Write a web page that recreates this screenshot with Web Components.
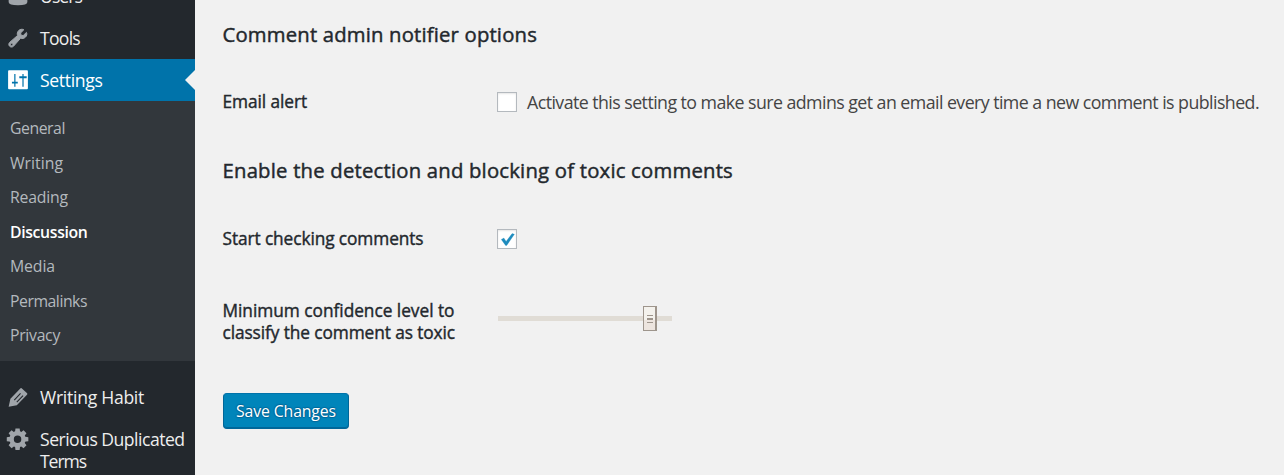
<!DOCTYPE html>
<html lang="en">
<head>
<meta charset="utf-8">
<title>Discussion Settings</title>
<style>
html,body{margin:0;height:100%;overflow:hidden}
body{font-family:"Open Sans","Noto Sans",sans-serif;background:#f1f1f1;color:#23282d}
</style>
</head>
<body>
<settings-page></settings-page>
<script>
const define = (name, html, setup) => {
  const t = document.createElement('template');
  t.innerHTML = html;
  customElements.define(name, class extends HTMLElement {
    constructor() {
      super();
      this.attachShadow({ mode: 'open' }).append(t.content.cloneNode(true));
    }
    connectedCallback() { if (setup) setup(this, this.shadowRoot); }
  });
};

// One line of text tracked to a given width.
define('fit-text', `<style>:host{display:block;white-space:nowrap;font-variant-ligatures:none}span{display:inline-block}</style><span><slot></slot></span>`,
  (el, root) => {
    const span = root.querySelector('span');
    const n = el.textContent.length;
    const natural = span.getBoundingClientRect().width;
    span.style.letterSpacing = ((+el.getAttribute('width') - natural) / n).toFixed(3) + 'px';
  });

const icons = {
  users: '<path d="M1.500 12h17v3.500q0 3-8.500 3t-8.500-3z"/>',
  tools: '<path stroke="currentColor" stroke-width=".9" d="M16.7 9.3c-1.2 1.2-2.9 1.500-4.400 1l-6.400 7.200c-1 1-2.600 1-3.500 0-1-1-1-2.500 0-3.500l7.200-6.300c-.6-1.500-.2-3.200 1-4.500C11.800 2 13.800 1.700 15.300 2.500l-2.900 2.900.3 2 2 .4 3-2.900c.7 1.500.3 3.200-1 4.400zM5 16.800c.5-.5.5-1.200 0-1.600-.4-.5-1.100-.5-1.600 0-.4.4-.4 1.100 0 1.600.5.400 1.200.400 1.600 0z" fill-rule="evenodd"/>',
  settings: '<path fill-rule="evenodd" d="M1.800 1.200h16.400q.8 0 .8.800v15.600q0 .8-.8.8H1.800q-.8 0-.8-.8V2q0-.8.800-.8zM6.600 4.500v7H4.500v1.700h2.100v2.900h1.100v-2.900h2.100v-1.700H7.700v-7zM14 4.500v2.100h-2.800v1.700H14v7.800h1.100V8.300h2.800V6.600h-2.800V4.500z"/>',
  edit: '<path d="M13.300 2.100l5 4.600q.5.700-.1 1.300l-9.300 9.600-7.400 1.300 1.600-7.200 9.200-9.600q.5-.5 1 0z"/><path d="M6.600 12.800l5.700-6M8.900 14.700l5.700-6" stroke="#23282d" stroke-width="1" fill="none"/>',
  gear: '<g transform="translate(9.600 10.200)"><circle r="5.400" fill="none" stroke="currentColor" stroke-width="4"/><path d="M-1.900-9.800h3.800l.5 4h-4.800zM-1.900 9.800h3.800l.5-4h-4.800zM-9.800-1.900v3.800l4 .5v-4.800zM9.800-1.900v3.800l-4 .5v-4.800z"/><path transform="rotate(45)" d="M-1.900-9.600h3.800l.5 4h-4.800zM-1.900 9.600h3.800l.5-4h-4.800zM-9.600-1.900v3.800l4 .5v-4.800zM9.600-1.900v3.800l-4 .5v-4.800z"/></g>'
};
define('menu-icon', `<style>:host{display:block;width:22px;height:22px}svg{display:block;width:100%;height:100%;fill:currentColor;overflow:visible}</style><svg viewBox="0 0 20 20"></svg>`,
  (el, root) => { root.querySelector('svg').innerHTML = icons[el.getAttribute('name')] || ''; });

define('menu-item', `<style>
:host{display:flex;align-items:flex-start;position:relative;box-sizing:border-box;min-height:42.400px;padding:10.700px 0 9.700px 6.500px;gap:11.500px;color:#eee;font-size:17.600px;line-height:22px}
menu-icon{color:#a0a5aa}
:host([current]){background:#0073aa;color:#fff}
:host([current]) menu-icon{color:#fff}
:host([current])::after{content:"";position:absolute;right:0;top:11px;border:10px solid transparent;border-left:0;border-right-color:#f1f1f1}
</style><menu-icon></menu-icon><div><slot></slot></div>`,
  (el, root) => {
    const icon = root.querySelector('menu-icon');
    icon.setAttribute('name', el.getAttribute('icon'));
    icon.shadowRoot.querySelector('svg').innerHTML = icons[el.getAttribute('icon')];
  });

define('sub-item', `<style>:host{display:block;padding-left:10px;font-size:15.800px;line-height:34.500px;color:#b4b9be}:host([current]){color:#fff;font-weight:600}</style><slot></slot>`);

define('admin-menu', `<style>
:host{display:block;width:195px;height:475px;background:#23282d;overflow:hidden;flex:none}
.menu{margin-top:-26px}
.sub{background:#32373c;padding:10px 0 8.500px;height:241.500px}
.gap{height:13.700px}
</style>
<div class="menu">
<menu-item icon="users"><fit-text width="42">Users</fit-text></menu-item>
<menu-item icon="tools"><fit-text width="40">Tools</fit-text></menu-item>
<menu-item icon="settings" current><fit-text width="62.500">Settings</fit-text></menu-item>
<div class="sub">
<sub-item><fit-text width="55">General</fit-text></sub-item>
<sub-item><fit-text width="53">Writing</fit-text></sub-item>
<sub-item><fit-text width="58">Reading</fit-text></sub-item>
<sub-item current><fit-text width="77.500">Discussion</fit-text></sub-item>
<sub-item><fit-text width="45">Media</fit-text></sub-item>
<sub-item><fit-text width="77">Permalinks</fit-text></sub-item>
<sub-item><fit-text width="50">Privacy</fit-text></sub-item>
</div>
<div class="gap"></div>
<menu-item icon="edit"><fit-text width="104">Writing Habit</fit-text></menu-item>
<menu-item icon="gear"><fit-text width="144.500">Serious Duplicated</fit-text><fit-text width="46">Terms</fit-text></menu-item>
</div>`);

define('section-title', `<style>:host{display:block;font-size:20.300px;line-height:28px;-webkit-text-stroke:.45px currentColor}</style><slot></slot>`);

define('form-row', `<style>
:host{display:grid;grid-template-columns:275px 1fr;align-items:start}
.label{font-size:17.300px;line-height:22px;-webkit-text-stroke:.4px currentColor}
</style><div class="label"><slot name="label"></slot></div><slot></slot>`);

define('check-box', `<style>
:host{display:flex;gap:10px;align-items:center;height:20px;color:#444;font-size:17.800px;line-height:24px}
i{box-sizing:border-box;width:20px;height:20px;border:1px solid #b4b9be;background:#fff;box-shadow:inset 0 1px 2px rgba(0,0,0,.1);flex:none}
svg{display:none;width:18px;height:18px}
:host([checked]) svg{display:block}
</style><i><svg viewBox="0 0 18 18"><path d="M3.300 9.400l2.600-1.300 2.200 3.400 6-7.900 2.300.7-7.700 11.100H7.600z" fill="#1e8cbe" stroke="#1e8cbe" stroke-width=".3"/></svg></i><slot></slot>`);

define('range-slider', `<style>
:host{display:flex;align-items:center;width:174px;height:25px}
.track{flex:1;height:5px;background:#e0dcd5}
.track:last-child{flex:none;width:15px}
.thumb{box-sizing:border-box;width:14px;height:25px;border:1px solid #9e958c;border-right-width:2px;background:linear-gradient(#f4f2ed 13px,#ede5df 13px);display:flex;flex-direction:column;align-items:center;padding-top:8px;gap:2px}
b{width:6px;height:1px;background:#9e958c}b:nth-child(2){height:2px}
</style><div class="track"></div><div class="thumb"><b></b><b></b><b></b></div><div class="track"></div>`);

define('primary-button', `<style>
:host{display:block}
button{box-sizing:border-box;display:flex;align-items:center;width:126px;height:36px;padding:0 0 0 12px;border:1px solid;border-color:#0073aa #006799 #006799;border-radius:4px;background:#0085ba;box-shadow:inset 0 -1px 0 #006799;color:#fff;font:15.800px/24px "Open Sans","Noto Sans",sans-serif;text-shadow:0 -1px 1px #006799,1px 0 1px #006799,0 1px 1px #006799,-1px 0 1px #006799}
</style><button><slot></slot></button>`);

define('settings-form', `<style>
:host{display:block;padding:20px 0 0 27.500px;flex:1}
.r1{margin-top:43px}.h2{margin-top:43px}.r2{margin-top:44px}.r3{margin-top:50px}
check-box{margin-top:1px;margin-left:-.500px}range-slider{margin-top:6px;margin-left:.500px}
.save{margin:49px 0 0 .500px}
</style>
<section-title><fit-text width="314.500">Comment admin notifier options</fit-text></section-title>
<form-row class="r1"><fit-text slot="label" width="84.500">Email alert</fit-text><check-box><fit-text width="732">Activate this setting to make sure admins get an email every time a new comment is published.</fit-text></check-box></form-row>
<section-title class="h2"><fit-text width="510.500">Enable the detection and blocking of toxic comments</fit-text></section-title>
<form-row class="r2"><fit-text slot="label" width="201">Start checking comments</fit-text><check-box checked></check-box></form-row>
<form-row class="r3"><div slot="label"><fit-text width="232">Minimum confidence level to</fit-text><fit-text width="232.500">classify the comment as toxic</fit-text></div><range-slider></range-slider></form-row>
<primary-button class="save"><fit-text width="100">Save Changes</fit-text></primary-button>`);

define('settings-page', `<style>:host{display:flex;width:1284px;height:475px;overflow:hidden;background:#f1f1f1}</style><admin-menu></admin-menu><settings-form></settings-form>`);
</script>
</body>
</html>
